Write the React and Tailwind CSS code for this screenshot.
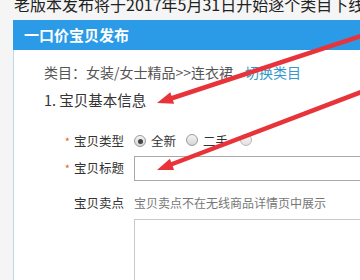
import React from "react";

function Radio({ checked, dim }) {
  return (
    <span
      className={`inline-flex items-center justify-center w-[12px] h-[12px] rounded-full border border-[#9a9a9a] bg-gradient-to-b from-[#f4f4f4] to-[#d6d6d6] ${dim ? "opacity-70" : ""}`}
    >
      {checked && <span className="w-[5px] h-[5px] rounded-full bg-[#444]" />}
    </span>
  );
}

export default function App() {
  const font = { fontFamily: '"Noto Sans CJK SC", "Noto Sans", sans-serif' };
  return (
    <div className="relative w-[360px] h-[280px] overflow-hidden bg-[#f5f5f5] flex" style={font}>
      <div className="w-[3px] h-full bg-[#3b3b3b]" />
      <div className="flex-1 flex flex-col pl-[13px]">
        <div className="h-[20px] overflow-hidden">
          <div className="-mt-[5px] pl-[1px] text-[16px] leading-[18px] text-[#222] whitespace-nowrap">
            老版本发布将于2017年5月31日开始逐个类目下线，下线后
          </div>
        </div>
        <div className="flex-1 flex flex-col">
          <div className="h-[30px] bg-[#2b9be8] flex items-center pl-[11px] text-white text-[15px] font-bold">
            一口价宝贝发布
          </div>
          <div className="flex-1 bg-white border-l border-[#bcd8ec] pl-[30px] pt-[13px] flex flex-col">
            <div className="h-[18px] leading-[18px] text-[14px] text-[#555] whitespace-nowrap">
              类目：女装/女士精品&gt;&gt;连衣裙
              <span className="ml-[12px] text-[#3399cc]">切换类目</span>
            </div>
            <div className="mt-[10px] h-[18px] leading-[18px] text-[14.5px] text-[#333] whitespace-nowrap">
              1. 宝贝基本信息
            </div>
            <div className="mt-[22px] h-[20px] flex items-center">
              <div className="w-[80px] text-right text-[12.5px] text-[#333]">
                <span className="text-[#e4653c] mr-[4px] text-[11px]">*</span>宝贝类型
              </div>
              <div className="ml-[10px] flex items-center text-[12.5px] text-[#333] whitespace-nowrap">
                <Radio checked />
                <span className="ml-[5px]">全新</span>
                <span className="ml-[10px]"><Radio /></span>
                <span className="ml-[5px]">二手</span>
                <span className="ml-[12px]"><Radio dim /></span>
              </div>
            </div>
            <div className="mt-[5px] h-[25px] flex items-center">
              <div className="w-[80px] text-right text-[12.5px] text-[#333]">
                <span className="text-[#e4653c] mr-[4px] text-[11px]">*</span>宝贝标题
              </div>
              <div className="ml-[10px] flex-1 h-[25px] border border-[#a9a9a9] border-r-0 bg-white" />
            </div>
            <div className="mt-[13px] h-[18px] flex items-center">
              <div className="w-[80px] text-right text-[12.5px] text-[#333]">宝贝卖点</div>
              <div className="ml-[10px] text-[12px] text-[#777] whitespace-nowrap">宝贝卖点不在无线商品详情页中展示</div>
            </div>
            <div className="mt-[7px] flex-1 flex">
              <div className="ml-[90px] flex-1 border-t border-l border-[#c8c8c8] bg-white" />
            </div>
          </div>
        </div>
      </div>
      <svg className="absolute left-0 top-0 pointer-events-none" width="360" height="280" viewBox="0 0 360 280">
        <line x1="364" y1="35" x2="171" y2="98.5" stroke="#e8333a" strokeWidth="4.5" strokeLinecap="round" />
        <polygon points="157,103 174.1,103.7 170.3,92.3" fill="#e8333a" />
        <line x1="364" y1="91" x2="171" y2="164.5" stroke="#e8333a" strokeWidth="4.5" strokeLinecap="round" />
        <polygon points="157,170 174.1,169.9 169.9,158.7" fill="#e8333a" />
      </svg>
    </div>
  );
}
